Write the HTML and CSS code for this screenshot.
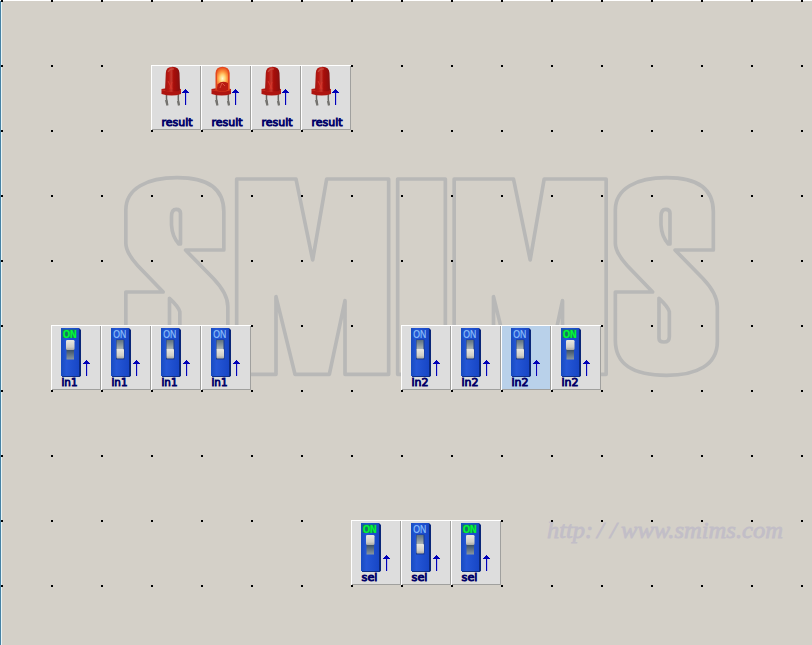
FILE: index.html
```html
<!DOCTYPE html>
<html lang="en">
<head>
<meta charset="utf-8">
<title>SMIMS</title>
<link rel="stylesheet" href="styles.css">
</head>
<body>
<svg class="defs" width="0" height="0" aria-hidden="true">
  <defs>
    <linearGradient id="body"><stop offset="0" stop-color="#174bc0"/><stop offset=".3" stop-color="#2557d6"/><stop offset="1" stop-color="#1746c5"/></linearGradient>
    <linearGradient id="slotUp" x2="0" y2="1"><stop offset="0" stop-color="#5d7180"/><stop offset="1" stop-color="#b4bcba"/></linearGradient>
    <linearGradient id="slotDown" x2="0" y2="1"><stop offset="0" stop-color="#344a62"/><stop offset="1" stop-color="#8997a0"/></linearGradient>
    <linearGradient id="knobFill" x2="0" y2="1"><stop offset="0" stop-color="#e9e8e0"/><stop offset=".7" stop-color="#d0cec6"/><stop offset="1" stop-color="#aaa9a4"/></linearGradient>
    <linearGradient id="dome"><stop offset="0" stop-color="#a31712"/><stop offset=".25" stop-color="#b91711"/><stop offset=".42" stop-color="#c4382e"/><stop offset=".58" stop-color="#a90d09"/><stop offset="1" stop-color="#841010"/></linearGradient>
    <radialGradient id="glow" cx=".5" cy=".65" r=".6"><stop offset="0" stop-color="#fff9d0"/><stop offset=".4" stop-color="#ffd476"/><stop offset=".7" stop-color="#ff9a42"/><stop offset="1" stop-color="#f06a28"/></radialGradient>
    <symbol id="arrow" viewBox="0 0 9 17"><path d="M5.5 4V16" stroke="#bcbce8"/><path d="M4 0H5V1H6V2H7V3H8V4H5V16H4V4H1V3H2V2H3V1H4Z" fill="#0000b8"/></symbol>
    <symbol id="switch-base" viewBox="0 0 50 65">
      <path d="M11 3H28L30 5V51L28 52H11Z" fill="#0a2778"/>
      <path d="M10 3H28V51H10Z" fill="url(#body)"/>
      <path d="M11 51.5H29" stroke="#102f87"/>
    </symbol>
    <symbol id="switch-off" viewBox="0 0 50 65">
      <use href="#switch-base"/>
      <text class="state" x="12.2" y="12.5" textLength="13" lengthAdjust="spacingAndGlyphs">ON</text>
      <path d="M15 14.5H23.5V34.5H15Z" fill="#18398c"/>
      <path d="M15.5 15H22.5V25H15.5Z" fill="url(#slotUp)"/>
      <rect x="15.5" y="24" width="7.5" height="9.5" rx="1" fill="url(#knobFill)"/>
    </symbol>
    <symbol id="switch-on" viewBox="0 0 50 65">
      <use href="#switch-base"/>
      <path d="M11.5 4.5H25.5V13H11.5Z" fill="#147564"/>
      <text class="state state-on" x="12" y="12.5" textLength="13.5" lengthAdjust="spacingAndGlyphs">ON</text>
      <path d="M15.5 24H23V34.5H15.5Z" fill="url(#slotDown)"/>
      <rect x="15" y="15" width="8.5" height="10" rx="1.3" fill="url(#knobFill)"/>
    </symbol>
    <symbol id="led-base" viewBox="0 0 50 65">
      <path d="M15.5 29V34L16.5 39M27.3 29V35L28 40" fill="none" stroke="#686763" stroke-width="1.5"/>
      <path d="M15 35L16.5 40.5M27 36L28 40.5" stroke="#74736f" stroke-width="2.2"/>
      <path d="M10.5 24Q20 22 30 24V29Q21 32 10.5 29Z" fill="#ae1510"/>
      <path d="M11 25Q20 28 30 25" fill="none" stroke="#cb2d20"/>
    </symbol>
    <symbol id="led-off" viewBox="0 0 50 65">
      <use href="#led-base"/>
      <path d="M14 25.5L14.8 8Q15 1.8 21.5 1.8Q28 1.8 28.5 8L29 25.5Q22 28 14 25.5Z" fill="url(#dome)"/>
      <path d="M17 7Q19 3.5 23 4" fill="none" stroke="#c94b3e" stroke-width="1.2"/>
      <path d="M17 16L21 24M21 17L19 24" stroke="#d8352b" stroke-width=".9"/>
    </symbol>
    <symbol id="led-on" viewBox="0 0 50 65">
      <use href="#led-base"/>
      <path d="M14.5 25V8Q15 1.8 21.5 1.8Q28 1.8 28.7 8V25Q22 28 14.5 25Z" fill="#e4481e"/>
      <path d="M16 19V9Q16 3.3 21.5 3.3Q27 3.3 27 9V19Z" fill="url(#glow)"/>
      <path d="M15.5 25L17 19Q21 15 27 18V25Q21 28 15.5 25Z" fill="#b81c12"/>
      <path d="M19 23L21 18L24 21" fill="none" stroke="#d9503c"/>
    </symbol>
    <path id="s" d="M820 255H705L788 340Q832 386 832 425V530C832 600 770 631 680 631C580 631 526 600 526 525V381H638L562 302Q526 263 526 235V135C526 70 590 38 680 38C770 38 820 70 820 140ZM690 237V145Q690 133 677 133Q663 133 663 155V180Q665 215 685 237ZM657 400V520Q657 531 672 531Q688 531 688 515V440Q684 425 657 400Z"/>
    <path id="m" d="M20 42H198L248 285L290 42H476V628H345V407L298 628H195L138 395V628H20Z"/>
  </defs>
</svg>
<main class="board">
  <svg class="watermark" viewBox="0 0 812 645" width="812" height="645">
    <g class="outline">
      <use href="#s" transform="translate(-49.5 165) scale(.33333)"/>
      <use href="#m" transform="translate(230 165) scale(.33333)"/>
      <path d="M503 42H646V628H503Z" transform="translate(230 165) scale(.33333)"/>
      <use href="#m" transform="translate(447.5 165) scale(.33333)"/>
      <use href="#s" transform="translate(440 165) scale(.33333)"/>
    </g>
    <text class="url" y="538"><tspan x="547" textLength="46" lengthAdjust="spacingAndGlyphs">http:</tspan><tspan x="597">/</tspan><tspan x="610">/</tspan><tspan x="621" textLength="162" lengthAdjust="spacingAndGlyphs">www.smims.com</tspan></text>
  </svg>
  <div class="dots"></div>
  <div class="parts">
    <div class="group result">
      <svg class="tile"><use href="#led-off"/><use href="#arrow" x="30" y="24" width="9" height="17"/><text x="10.5" y="61" textLength="31" lengthAdjust="spacingAndGlyphs">result</text></svg>
      <svg class="tile"><use href="#led-on"/><use href="#arrow" x="30" y="24" width="9" height="17"/><text x="10.5" y="61" textLength="31" lengthAdjust="spacingAndGlyphs">result</text></svg>
      <svg class="tile"><use href="#led-off"/><use href="#arrow" x="30" y="24" width="9" height="17"/><text x="10.5" y="61" textLength="31" lengthAdjust="spacingAndGlyphs">result</text></svg>
      <svg class="tile"><use href="#led-off"/><use href="#arrow" x="30" y="24" width="9" height="17"/><text x="10.5" y="61" textLength="31" lengthAdjust="spacingAndGlyphs">result</text></svg>
    </div>
    <div class="group in1">
      <svg class="tile"><use href="#switch-on"/><use href="#arrow" x="31" y="35" width="9" height="17"/><text x="10.5" y="61" textLength="16" lengthAdjust="spacingAndGlyphs">in1</text></svg>
      <svg class="tile"><use href="#switch-off"/><use href="#arrow" x="31" y="35" width="9" height="17"/><text x="10.5" y="61" textLength="16" lengthAdjust="spacingAndGlyphs">in1</text></svg>
      <svg class="tile"><use href="#switch-off"/><use href="#arrow" x="31" y="35" width="9" height="17"/><text x="10.5" y="61" textLength="16" lengthAdjust="spacingAndGlyphs">in1</text></svg>
      <svg class="tile"><use href="#switch-off"/><use href="#arrow" x="31" y="35" width="9" height="17"/><text x="10.5" y="61" textLength="16" lengthAdjust="spacingAndGlyphs">in1</text></svg>
    </div>
    <div class="group in2">
      <svg class="tile"><use href="#switch-off"/><use href="#arrow" x="31" y="35" width="9" height="17"/><text x="10.5" y="61" textLength="17" lengthAdjust="spacingAndGlyphs">in2</text></svg>
      <svg class="tile"><use href="#switch-off"/><use href="#arrow" x="31" y="35" width="9" height="17"/><text x="10.5" y="61" textLength="17" lengthAdjust="spacingAndGlyphs">in2</text></svg>
      <svg class="tile selected"><use href="#switch-off"/><use href="#arrow" x="31" y="35" width="9" height="17"/><text x="10.5" y="61" textLength="17" lengthAdjust="spacingAndGlyphs">in2</text></svg>
      <svg class="tile"><use href="#switch-on"/><use href="#arrow" x="31" y="35" width="9" height="17"/><text x="10.5" y="61" textLength="17" lengthAdjust="spacingAndGlyphs">in2</text></svg>
    </div>
    <div class="group sel">
      <svg class="tile"><use href="#switch-on"/><use href="#arrow" x="31" y="35" width="9" height="17"/><text x="10.5" y="61" textLength="16" lengthAdjust="spacingAndGlyphs">sel</text></svg>
      <svg class="tile"><use href="#switch-off"/><use href="#arrow" x="31" y="35" width="9" height="17"/><text x="10.5" y="61" textLength="16" lengthAdjust="spacingAndGlyphs">sel</text></svg>
      <svg class="tile"><use href="#switch-on"/><use href="#arrow" x="31" y="35" width="9" height="17"/><text x="10.5" y="61" textLength="16" lengthAdjust="spacingAndGlyphs">sel</text></svg>
    </div>
  </div>
</main>
</body>
</html>
```
FILE: styles.css
```css
body { margin: 0; overflow: hidden; }
.defs { position: absolute; }
.board {
  display: grid;
  width: 812px;
  height: 645px;
  overflow: hidden;
  background:
    linear-gradient(#fff, #fff) 0 0 / 100% 1px no-repeat,
    linear-gradient(90deg, #4682a5 1px, #e8f4f5 1px) 0 0 / 2px 100% no-repeat,
    #d4d0c8;
}
/* watermark, grid dots and parts are stacked in one cell */
.board > * { grid-area: 1 / 1; }
.outline { fill: none; stroke: #b8b8b7; stroke-width: 11; stroke-linejoin: round; }
.url { font: italic 24px "Liberation Serif", serif; fill: #c2bec7; stroke: #c2bec7; stroke-width: .8; }
.dots {
  margin-left: 1px;
  background: conic-gradient(from 0deg at 2px 2px, transparent 270deg, #000 270deg) 0 0 / 50px 65px;
}
.parts {
  display: grid;
  grid-template: repeat(9, 65px) / repeat(16, 50px);
  padding-left: 1px;
}
.group { display: flex; }
.result { grid-area: 2 / 4 / 3 / 8; }
.in1 { grid-area: 6 / 2 / 7 / 6; }
.in2 { grid-area: 6 / 9 / 7 / 13; }
.sel { grid-area: 9 / 8 / 10 / 11; }
.tile {
  display: block;
  flex: none;
  width: 50px;
  height: 65px;
  background: #dddddd;
  box-shadow: inset 1px 1px #fff, inset -1px -1px #a0a09e;
}
.selected { background: #b9d1ea; }
.tile text { font: 11px "DejaVu Sans", sans-serif; fill: #000068; stroke: #000068; stroke-width: .85; }
text.state { font: 10.5px "Liberation Sans", sans-serif; fill: #8fc1fa; stroke: #8fc1fa; stroke-width: .2; }
text.state-on { font-weight: bold; fill: #00ff32; stroke: #00ff32; }
```
